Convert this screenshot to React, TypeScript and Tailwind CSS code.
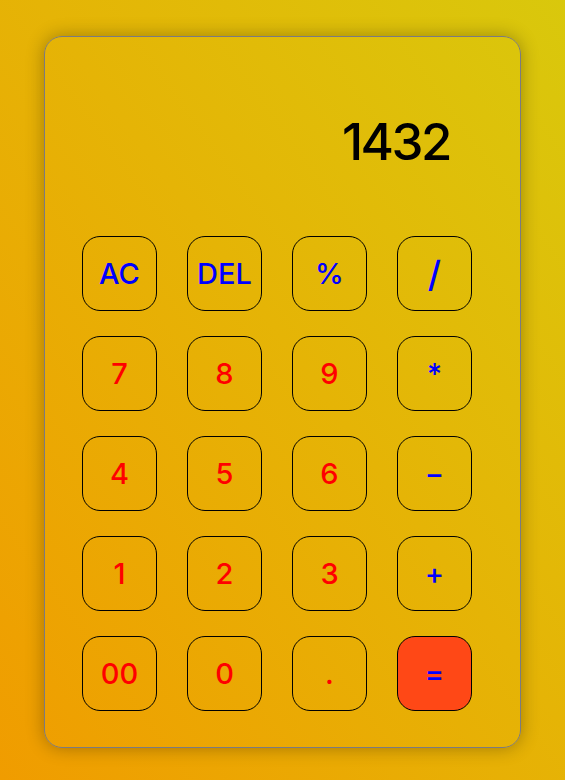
import React, { useState } from 'react';

// Keypad layout: [label, kind]
const KEYS: [string, 'op' | 'num' | 'eq'][] = [
  ['AC', 'op'], ['DEL', 'op'], ['%', 'op'], ['/', 'op'],
  ['7', 'num'], ['8', 'num'], ['9', 'num'], ['*', 'op'],
  ['4', 'num'], ['5', 'num'], ['6', 'num'], ['-', 'op'],
  ['1', 'num'], ['2', 'num'], ['3', 'num'], ['+', 'op'],
  ['00', 'num'], ['0', 'num'], ['.', 'num'], ['=', 'eq'],
];

export default function App() {
  const [display, setDisplay] = useState('1432');

  const press = (key: string) => {
    if (key === 'AC') return setDisplay('');
    if (key === 'DEL') return setDisplay(display.slice(0, -1));
    if (key === '=') {
      try {
        // eslint-disable-next-line no-new-func
        setDisplay(String(Function(`return (${display})`)()));
      } catch {
        setDisplay('Error');
      }
      return;
    }
    setDisplay(display + key);
  };

  return (
    <div
      className="min-h-screen w-full bg-linear-to-tr from-[#f09c00] to-[#d9c80c] flex justify-center pt-[36px]"
      style={{ fontFamily: 'Inter, "Open Sans", sans-serif' }}
    >
      <div className="w-[477px] h-[712px] rounded-[18px] border border-[#7b7b80] shadow-[0_0_18px_rgba(0,0,0,0.3)] pl-[37px] flex flex-col">
        <div className="h-[199px] w-[391px] flex items-center justify-end pr-[23px] pt-[10px]">
          <span className="text-[51px] font-medium text-black leading-none tracking-[-2.5px]">{display}</span>
        </div>
        <div className="grid grid-cols-[repeat(4,75px)] gap-x-[30px] gap-y-[25px]">
          {KEYS.map(([label, kind]) => (
            <button
              key={label}
              onClick={() => press(label)}
              className={`w-[75px] h-[75px] rounded-[18px] border border-black flex items-center justify-center text-[29px] font-medium leading-none ${
                kind === 'num' ? 'text-[#ff0000]' : 'text-[#0000ff]'
              } ${kind === 'eq' ? 'bg-[#ff4816]' : 'bg-transparent'}`}
            >
              {label === '-' ? '−' : label === '/' ? <span className="text-[36px]">/</span> : label}
            </button>
          ))}
        </div>
      </div>
    </div>
  );
}
